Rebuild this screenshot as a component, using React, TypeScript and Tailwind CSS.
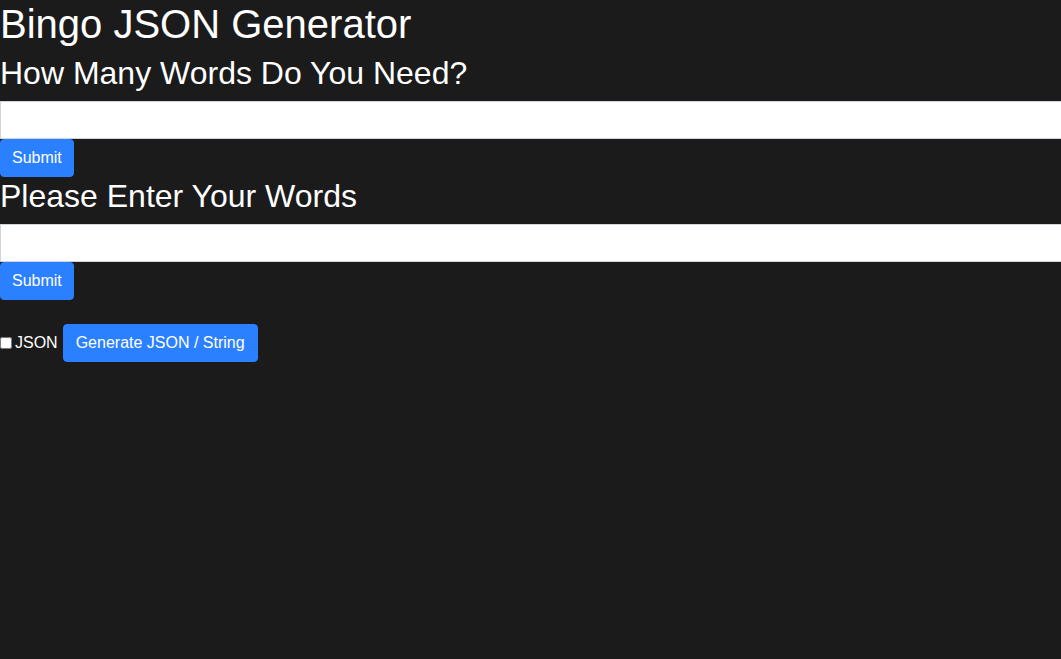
import React, { useState } from 'react';

export default function App() {
  const [count, setCount] = useState('');
  const [words, setWords] = useState('');
  const [asJson, setAsJson] = useState(false);

  const btn =
    'bg-[#2b80ff] text-white text-base leading-6 py-1.5 border border-[#2b80ff] rounded-[4px]';

  return (
    <div className="min-h-screen overflow-x-hidden bg-[#1b1b1b] text-white font-['Liberation_Sans',Arial,sans-serif]">
      <h1 className="text-[40px] leading-[1.2] mb-1.5">Bingo JSON Generator</h1>

      <h2 className="text-[32px] leading-[1.2] mb-[9px]">How Many Words Do You Need?</h2>
      <input
        type="text"
        value={count}
        onChange={(e) => setCount(e.target.value)}
        className="block w-[calc(100%+4px)] h-[38px] bg-white text-[#495057] border border-[#ced4da] px-3 outline-none"
      />
      <button type="button" className={`${btn} px-[11px]`}>
        Submit
      </button>

      <h2 className="text-[32px] leading-[1.2] mb-[8.6px]">Please Enter Your Words</h2>
      <input
        type="text"
        value={words}
        onChange={(e) => setWords(e.target.value)}
        className="block w-[calc(100%+4px)] h-[38px] bg-white text-[#495057] border border-[#ced4da] px-3 outline-none"
      />
      <button type="button" className={`${btn} px-[11px]`}>
        Submit
      </button>

      {/* Output options */}
      <div className="flex items-center mt-6">
        <input
          type="checkbox"
          checked={asJson}
          onChange={(e) => setAsJson(e.target.checked)}
          className="w-[12px] h-[12px] m-0 appearance-auto"
        />
        <label className="ml-[3px] text-base">JSON</label>
        <button type="button" className={`${btn} px-3 ml-[5px]`}>
          Generate JSON / String
        </button>
      </div>
    </div>
  );
}
